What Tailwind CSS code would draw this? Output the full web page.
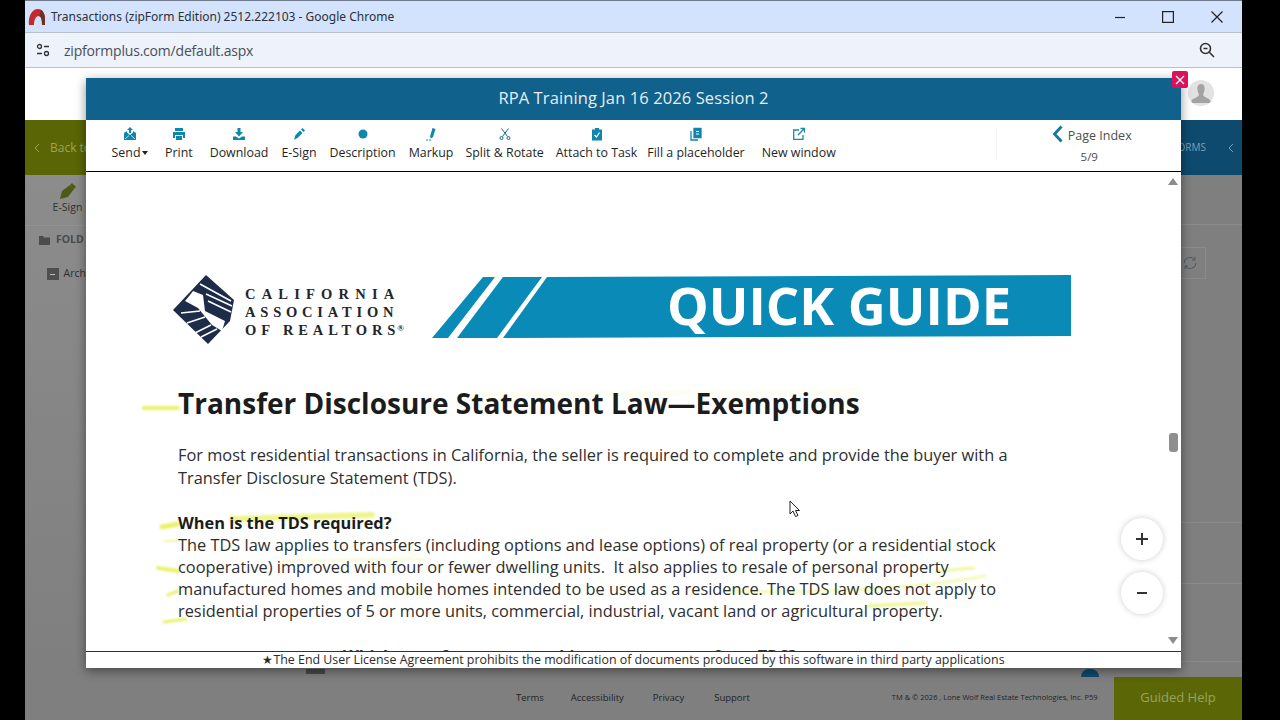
<!DOCTYPE html>
<html lang="en">
<head>
    <meta charset="UTF-8" />
    <title>Transactions (zipForm Edition)</title>
    <script src="https://cdn.jsdelivr.net/npm/@tailwindcss/browser@4"></script>
</head>
<body class="bg-black h-[720px] w-[1280px] overflow-hidden font-['Open_Sans',sans-serif]">
    <div class="relative ml-[25px] w-[1217px] h-[720px] flex flex-col bg-[#7f7f7f] overflow-hidden">

        <!-- chrome title bar -->
        <div class="h-[32px] bg-[#d3e3fd] border-t border-[#6f7a8c] flex items-center shrink-0">
            <svg class="ml-[3px]" width="18" height="18" viewBox="0 0 18 18"><path d="M1 17C0 8 4 1 10 1C15 1 17 6 17 11L17 17L14 17C14 11 13 8 10 8C7 9 6 13 6 17Z" fill="#c22a2e"/><path d="M13 2C15.500 3.500 17 7 17 11V17H14C14 12 13.500 9 11.500 8Z" fill="#6e3026"/></svg>
            <span class="ml-[5px] text-[12px] text-[#2b3038] font-['Noto_Sans',sans-serif] whitespace-nowrap">Transactions (zipForm Edition) 2512.222103 - Google Chrome</span>
            <div class="ml-auto flex items-center">
                <svg width="12" height="12" viewBox="0 0 12 12" class="mr-[36px]"><path d="M1 6.500H11" stroke="#222" stroke-width="1.200"/></svg>
                <svg width="12" height="12" viewBox="0 0 12 12" class="mr-[37px]"><rect x=".6" y=".6" width="10.800" height="10.800" fill="none" stroke="#222" stroke-width="1.200"/></svg>
                <svg width="12" height="12" viewBox="0 0 12 12" class="mr-[19px]"><path d="M.5.5L11.500 11.500M11.500.5L.5 11.500" stroke="#222" stroke-width="1.200"/></svg>
            </div>
        </div>

        <!-- chrome address bar -->
        <div class="h-[36px] bg-[#edf2fb] border-t border-b border-[#b9c0ca] flex items-center shrink-0">
            <svg class="ml-[11px]" width="14" height="14" viewBox="0 0 14 14" fill="none" stroke="#333" stroke-width="1.300"><circle cx="3.500" cy="3.500" r="2"/><path d="M8 3.500H13M1 10.500H6"/><circle cx="10.500" cy="10.500" r="2"/></svg>
            <span class="ml-[14px] text-[14px] text-[#4a4f57] whitespace-nowrap tracking-[-0.2px]">zipformplus.com/default.aspx</span>
            <svg class="ml-auto mr-[27px]" width="16" height="16" viewBox="0 0 16 16" fill="none" stroke="#333" stroke-width="1.600"><circle cx="6.500" cy="6.500" r="5"/><path d="M10.300 10.300L15 15M4.500 6.500H8.500"/></svg>
        </div>

        <!-- app header -->
        <div class="h-[52px] bg-white flex items-center justify-end pr-[28px] pb-[2px] shrink-0">
            <div class="w-[26px] h-[26px] rounded-full bg-[#e2e2e2] overflow-hidden">
                <svg width="26" height="26" viewBox="0 0 26 26"><path d="M13 4C10 4 9 7 9.500 10C9.800 12 10.500 13.500 11 14.500C11 16 9 17 6 18.500C4 19.500 3 21 3 23H23C23 21 22 19.500 20 18.500C17 17 15 16 15 14.500C15.500 13.500 16.200 12 16.500 10C17 7 16 4 13 4Z" fill="#a3a3a3"/></svg>
            </div>
        </div>

        <!-- app nav (dimmed) -->
        <div class="h-[55px] flex shrink-0">
            <div class="w-[200px] bg-[#5a6505] flex items-center pl-[9px] text-[12px] text-[#9aa65a]">
                <svg width="6" height="10" viewBox="0 0 6 10" fill="none" stroke="#9aa65a"><path d="M5 1L1 5L5 9"/></svg>
                <span class="ml-[10px]">Back to</span>
            </div>
            <div class="flex-1 bg-[#0d4a6e] flex items-center justify-end text-[10px] text-[#7c9fb5]">
                <span class="mr-[2px]">FORMS</span>
                <svg class="ml-[20px] mr-[8px]" width="6" height="10" viewBox="0 0 6 10" fill="none" stroke="#7c9fb5"><path d="M5 1L1 5L5 9"/></svg>
            </div>
        </div>

        <!-- app body (dimmed) -->
        <div class="flex-1 flex justify-between min-h-0">
            <div class="w-[61px] text-[10.500px] text-[#2f2f2f] bg-linear-to-b from-[#8c8c8c] to-[#7f7f7f]">
                <div class="h-[51px] border-b border-[#939393] flex flex-col items-center pt-[7px] pl-[24px]">
                    <svg width="18" height="18" viewBox="0 0 18 18"><path d="M1 17L3 9L11 3L15 7L9 15Z" fill="#4c5a12"/><path d="M11 3L13 1L17 5L15 7Z" fill="#4c5a12"/></svg>
                    <span class="whitespace-nowrap">E-Sign</span>
                </div>
                <div class="h-[28px] flex items-center pl-[14px] gap-[6px] font-bold text-[#4b4b4b]">
                    <svg width="11" height="10" viewBox="0 0 11 10"><path d="M0 1H4L5 2.500H11V10H0Z" fill="#4c4c4c"/></svg>
                    <span>FOLD</span>
                </div>
                <div class="h-[40px] flex items-center pl-[22px] gap-[5px]">
                    <span class="w-[12px] h-[12px] bg-[#4f4f4f] flex items-center justify-center"><span class="w-[5px] h-[1px] bg-[#bbb]"></span></span>
                    <span>Arch</span>
                </div>
            </div>
            <div class="w-[61px] flex flex-col">
                <div class="h-[50px] border-b border-[#8a8a8a]"></div>
                <div class="mt-[22px] w-[32px] h-[32px] border border-[#8a8a8a] flex items-center justify-center ml-[-7px]">
                    <svg width="16" height="16" viewBox="0 0 16 16" fill="none" stroke="#4d5a66" stroke-width="1"><path d="M2 8A6 6 0 0 1 13 5M14 8A6 6 0 0 1 3 11M13 2V5H10M3 14V11H6"/></svg>
                </div>
                <div class="h-[1px] bg-[#8a8a8a] mt-[243px]"></div>
                <div class="h-[1px] bg-[#8a8a8a] mt-[60px]"></div>
                <div class="h-[1px] bg-[#8a8a8a] mt-[77px]"></div>
            </div>
        </div>

        <!-- app footer (dimmed) -->
        <div class="h-[43px] flex items-center text-[9.500px] text-[#242424] shrink-0 relative pb-[1px]">
            <span class="ml-[491px]">Terms</span>
            <span class="ml-[27px]">Accessibility</span>
            <span class="ml-[29px]">Privacy</span>
            <span class="ml-[30px]">Support</span>
            <span class="ml-[142px] text-[7.500px] whitespace-nowrap">TM &amp; © 2026 , Lone Wolf Real Estate Technologies, Inc. P59</span>
            <div class="absolute right-0 top-0 w-[128px] h-[43px] bg-[#5b6706] flex items-center justify-center pb-[2px] text-[13px] text-[#98a45e]">Guided Help</div>
        </div>

        <!-- bits of the page peeking out below the modal -->
        <div class="absolute left-[281px] top-[669px] w-[19px] h-[5px] bg-[#4a4a4a]"></div>
        <div class="absolute left-[1056px] top-[669px] w-[18px] h-[8px] rounded-t-full bg-[#0d4a6e]"></div>

        <!-- modal -->
        <div class="absolute left-[61px] top-[78px] w-[1095px] h-[590px] bg-white flex flex-col shadow-[0_3px_10px_rgba(0,0,0,0.45)]">
            <div class="h-[42px] bg-[#10618c] flex items-center justify-center text-[16.500px] text-[#e6eef3] shrink-0 whitespace-nowrap tracking-[0.1px] pb-[2px]">RPA Training Jan 16 2026 Session 2</div>

            <!-- toolbar -->
            <div class="h-[52px] border-b border-black flex items-start shrink-0 text-[12.400px] text-[#1f1f1f] whitespace-nowrap">
                <div class="flex items-start pl-[25px] pt-[7px]">
                    <div class="flex flex-col items-center w-[38px] gap-[3px]">
                        <svg width="14" height="14" viewBox="0 0 14 14" fill="#0f86ad"><path d="M7 0L10 3H8V6H6V3H4Z"/><path d="M1 6L4 4V5.500L7 8L10 5.500V4L13 6V13H1Z"/><path d="M2 12L6 8.500M12 12L8 8.500" stroke="#fff" stroke-width=".7"/></svg>
                        <span>Send<span class="inline-block ml-[2px] mb-[2px] border-x-[3.500px] border-t-[4px] border-x-transparent border-t-[#222]"></span></span>
                    </div>
                    <div class="flex flex-col items-center ml-[16px] gap-[3px]">
                        <svg width="14" height="14" viewBox="0 0 14 14" fill="#0f86ad"><path d="M3 1H11V4H3Z"/><path d="M1 5H13V11H11V8H3V11H1Z"/><path d="M4 9H10V13H4Z"/></svg>
                        <span>Print</span>
                    </div>
                    <div class="flex flex-col items-center ml-[17px] gap-[3px]">
                        <svg width="14" height="14" viewBox="0 0 14 14" fill="#0f86ad"><path d="M5.500 1H8.500V5H11L7 9.500L3 5H5.500Z"/><path d="M1 9.500H4L7 11.500L10 9.500H13V13H1Z"/></svg>
                        <span>Download</span>
                    </div>
                    <div class="flex flex-col items-center ml-[13px] gap-[3px]">
                        <svg width="14" height="14" viewBox="0 0 14 14" fill="#0f86ad"><path d="M2 13L3.500 8L8 3.500L10.500 6L6 10.500Z"/><path d="M9 2.500L10.500 1L13 3.500L11.500 5Z"/></svg>
                        <span>E-Sign</span>
                    </div>
                    <div class="flex flex-col items-center ml-[13px] gap-[3px]">
                        <svg width="14" height="14" viewBox="0 0 14 14" fill="#0f86ad"><circle cx="7" cy="7" r="4.500"/></svg>
                        <span>Description</span>
                    </div>
                    <div class="flex flex-col items-center ml-[13px] gap-[3px]">
                        <svg width="14" height="14" viewBox="0 0 14 14" fill="#0f86ad"><path d="M6 9.500L8.500 1L11.500 2L9 10L7 11.500Z"/><path d="M2 13H7" stroke="#0f86ad" stroke-width="1" stroke-dasharray="2 1"/></svg>
                        <span>Markup</span>
                    </div>
                    <div class="flex flex-col items-center ml-[12px] gap-[3px]">
                        <svg width="14" height="14" viewBox="0 0 14 14" fill="none" stroke="#0f6f92" stroke-width="1"><path d="M3.500 1.500L9.500 9.500M10.500 1.500L4.500 9.500"/><circle cx="3.500" cy="11" r="1.500"/><circle cx="10.500" cy="11" r="1.500"/></svg>
                        <span>Split &amp; Rotate</span>
                    </div>
                    <div class="flex flex-col items-center ml-[12px] gap-[3px]">
                        <svg width="14" height="14" viewBox="0 0 14 14"><path d="M2 2.500H5V1H9V2.500H12V13.500H2Z" fill="#0f86ad"/><path d="M4.500 8L6.500 10L9.500 5.500" fill="none" stroke="#fff" stroke-width="1.200"/></svg>
                        <span>Attach to Task</span>
                    </div>
                    <div class="flex flex-col items-center ml-[10px] gap-[3px]">
                        <svg width="14" height="14" viewBox="0 0 14 14" fill="none" stroke="#0f86ad" stroke-width="1.300"><path d="M5 1.500H12V10.500H5Z" fill="#0f86ad"/><path d="M2 4V13H9"/><path d="M7 4.500H10M7 7H10" stroke="#fff" stroke-width="1"/></svg>
                        <span>Fill a placeholder</span>
                    </div>
                    <div class="flex flex-col items-center ml-[17px] gap-[3px]">
                        <svg width="14" height="14" viewBox="0 0 14 14" fill="none" stroke="#1b8aa8" stroke-width="1.300"><path d="M7 3H1.700V12.300H11V8"/><path d="M6 8L12 2M8.500 1.500H12.500V5.500"/></svg>
                        <span>New window</span>
                    </div>
                </div>
                <div class="ml-[160px] mt-[8px] h-[32px] w-px bg-[#f3f3f3]"></div>
                <div class="ml-[55px] mt-[5px] flex flex-col items-center text-[#4d4d4d] w-[80px]">
                    <div class="flex items-center gap-[5px]">
                        <svg class="mb-[3px]" width="11" height="18" viewBox="0 0 11 18" fill="none" stroke="#14789f" stroke-width="2.800"><path d="M9.500 1.500L2.500 9L9.500 16.500"/></svg>
                        <span class="text-[12.500px] mt-[2px]">Page Index</span>
                    </div>
                    <span class="mt-[2px] text-[11.500px] ml-[-5px]">5/9</span>
                </div>
            </div>

            <!-- document -->
            <div class="relative flex-1 min-h-0 overflow-hidden text-[16.350px] text-[#2e2e2e] whitespace-nowrap">
                <svg class="absolute inset-0" width="1095" height="480" viewBox="86 172 1095 480" fill="none" stroke-linecap="round">
                    <defs><filter id="b" x="-10%" y="-10%" width="120%" height="120%"><feGaussianBlur stdDeviation="1.300"/></filter></defs>
                    <g filter="url(#b)" stroke="#e9f26c">
                        <path d="M144 408H178" stroke-width="4"/>
                        <path d="M162 527L178 524" stroke-width="5"/>
                        <path d="M232 519L372 515" stroke-width="6" stroke="#eef58a"/>
                        <path d="M165 541L178 541" stroke-width="2" stroke="#f1f7a0"/>
                        <path d="M158 568L178 571" stroke-width="4"/>
                        <path d="M168 595L178 591" stroke-width="3"/>
                        <path d="M164 622L186 619" stroke-width="3"/>
                        <path d="M936 571L974 568" stroke-width="3" stroke="#f1f7a0"/>
                        <path d="M730 591C780 593 900 592 985 576" stroke-width="3" stroke="#f5f9b8"/>
                        <path d="M868 606L925 603" stroke-width="4" stroke="#f1f7a0"/>
                        <path d="M280 561L430 559" stroke-width="3" stroke="#f9fbdc"/>
                        <path d="M460 395L860 391" stroke-width="5" stroke="#fdfdf0"/>
                    </g>
                </svg>

                <div class="relative pt-[103px] pl-[87px]">
                    <div class="flex h-[72px]">
                        <svg class="shrink-0" width="62" height="70" viewBox="0 0 62 70">
                            <path d="M33 0L61 25L57 46L35 69L0 35Z" fill="#1d2c48"/>
                            <path d="M20 16L30 20L32 36L52 46L49 56L39 50L25 33L12 26L17 20Z" fill="#fff"/>
                            <path d="M27 9L58 26M33 19L59 31M35 26L58 37M8 38L27 36M14 48L32 42M22 58L38 50M28 62L44 54" stroke="#fff" stroke-width="1.500"/>
                        </svg>
                        <div class="ml-[10px] w-[187px] pt-[10px] font-['Liberation_Serif',serif] font-bold text-[14.500px] leading-[18px] tracking-[6.200px] text-[#23262b]">
                            <div>CALIFORNIA</div>
                            <div class="tracking-[4.800px]">ASSOCIATION</div>
                            <div class="tracking-[4.900px]">OF REALTORS<span class="inline-block ml-[-3px] align-[4px] leading-none text-[9px] tracking-normal">®</span></div>
                        </div>
                        <div class="relative shrink-0 w-[640px] h-[64px]">
                            <svg width="640" height="64" viewBox="0 0 640 64"><path d="M0 63L51 2H63L16 63ZM25 63L71 2H110L65 63ZM71 63L115 2L639 0V61L71 63Z" fill="#0a8ab7"/></svg>
                            <span class="absolute left-[235px] top-[-4px] text-[52.500px] leading-[68px] font-bold text-white">QUICK GUIDE</span>
                        </div>
                    </div>
                </div>

                <div class="relative pl-[92px]">
                    <h1 class="mt-[38px] text-[28px] leading-[36px] font-bold text-[#1c1c1c]">Transfer Disclosure Statement Law—Exemptions</h1>
                    <div class="mt-[23px] leading-[23px]">
                        <div>For most residential transactions in California, the seller is required to complete and provide the buyer with a</div>
                        <div>Transfer Disclosure Statement (TDS).</div>
                    </div>
                    <div class="mt-[22px] leading-[22px]">
                        <div class="font-bold text-[#1c1c1c]">When is the TDS required?</div>
                        <div>The TDS law applies to transfers (including options and lease options) of real property (or a residential stock</div>
                        <div>cooperative) improved with four or fewer dwelling units.&nbsp; It also applies to resale of personal property</div>
                        <div>manufactured homes and mobile homes intended to be used as a residence. The TDS law does not apply to</div>
                        <div>residential properties of 5 or more units, commercial, industrial, vacant land or agricultural property.</div>
                    </div>
                    <div class="mt-[23px] leading-[22px] font-bold pl-[165px]">Which transfers are not subject to or exempt from TDS?</div>
                </div>

                <!-- scrollbar -->
                <div class="absolute right-[3px] top-[6px] border-x-[5px] border-b-[7px] border-x-transparent border-b-[#8c8c8c]"></div>
                <div class="absolute right-[3px] top-[261px] w-[9px] h-[19px] rounded-[3px] bg-[#8f8f8f]"></div>
                <div class="absolute right-[3px] bottom-[7px] border-x-[5px] border-t-[7px] border-x-transparent border-t-[#8c8c8c]"></div>

                <!-- zoom buttons -->
                <div class="absolute left-[1035px] top-[346px] w-[42px] h-[42px] rounded-full bg-white shadow-[0_0_6px_rgba(0,0,0,0.2)] flex items-center justify-center">
                    <svg width="12" height="12" viewBox="0 0 12 12"><path d="M6 0V12M0 6H12" stroke="#333" stroke-width="2"/></svg>
                </div>
                <div class="absolute left-[1035px] top-[400px] w-[42px] h-[42px] rounded-full bg-white shadow-[0_0_6px_rgba(0,0,0,0.2)] flex items-center justify-center">
                    <svg width="10" height="12" viewBox="0 0 10 12"><path d="M0 6H10" stroke="#333" stroke-width="2"/></svg>
                </div>

                <!-- mouse pointer -->
                <svg class="absolute left-[703px] top-[328px]" width="12" height="18" viewBox="0 0 12 18"><path d="M1 1V14L4 11L6.500 16.500L9 15.500L6.500 10.500H10.500Z" fill="#fff" stroke="#222" stroke-width="1"/></svg>
            </div>

            <!-- licence note -->
            <div class="h-[17px] border-t border-[#333] bg-white flex items-center justify-center text-[12.400px] text-[#2b2b2b] shrink-0 whitespace-nowrap">★The End User License Agreement prohibits the modification of documents produced by this software in third party applications</div>

            <!-- close button -->
            <div class="absolute right-[-7px] top-[-7px] w-[16px] h-[17px] rounded-[2px] bg-[#d9125c] flex items-center justify-center">
                <svg width="10" height="10" viewBox="0 0 10 10"><path d="M1 1L9 9M9 1L1 9" stroke="#fff" stroke-width="1.200"/></svg>
            </div>
        </div>
    </div>
</body>
</html>
